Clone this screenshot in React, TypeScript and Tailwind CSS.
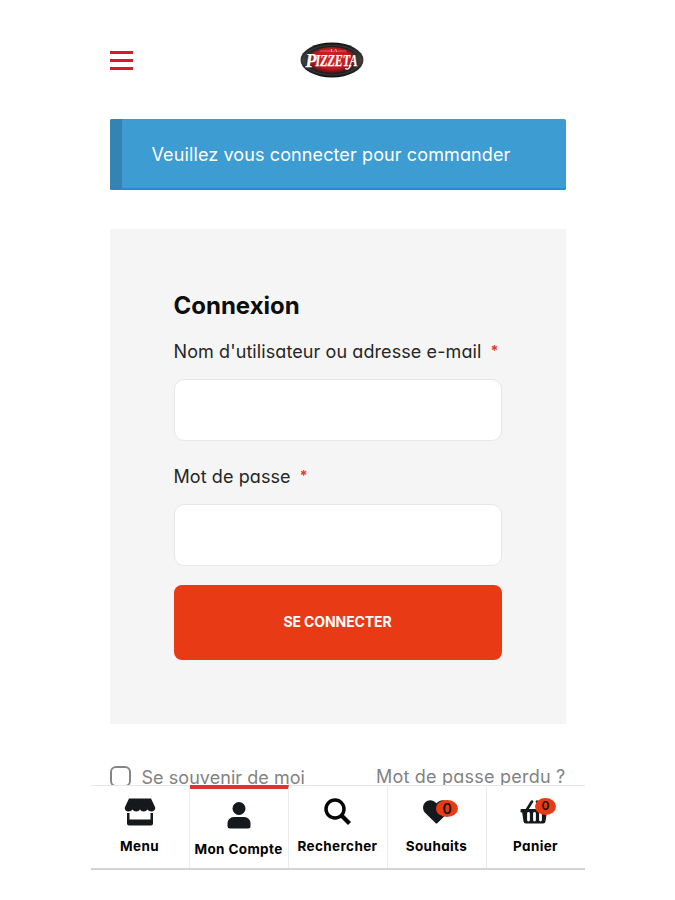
import type { ReactNode } from "react";

function Logo() {
  return (
    <svg width="64" height="36" viewBox="0 0 64 36" className="block">
      <defs>
        <radialGradient id="red" cx="50%" cy="45%" r="55%">
          <stop offset="0" stopColor="#e0252b" />
          <stop offset="0.7" stopColor="#bd1a20" />
          <stop offset="1" stopColor="#5d1014" />
        </radialGradient>
        <linearGradient id="rim" x1="0" y1="0" x2="0" y2="1">
          <stop offset="0" stopColor="#161616" />
          <stop offset="0.5" stopColor="#3b3b3b" />
          <stop offset="1" stopColor="#141414" />
        </linearGradient>
      </defs>
      <ellipse cx="32" cy="18" rx="31.5" ry="17.5" fill="url(#rim)" />
      <ellipse cx="32" cy="18" rx="28.5" ry="14.8" fill="none" stroke="#4c4c4c" strokeWidth="0.6" />
      <ellipse cx="32" cy="18" rx="23.5" ry="13" fill="url(#red)" />
      <path d="M20 9h10M38 9h8" stroke="#dc8a8a" strokeWidth="0.7" />
      <text x="34" y="10" textAnchor="middle" fontFamily="Liberation Serif, serif" fontWeight="700" fontSize="5" fill="#f3c9c9">LA</text>
      <g fontFamily="Liberation Serif, serif" fontWeight="700" fontStyle="italic" fill="#fff" stroke="#fff" strokeWidth="0.25">
        <text x="5.5" y="24.5" fontSize="19" textLength="11" lengthAdjust="spacingAndGlyphs">P</text>
        <text x="15.500" y="24" fontSize="16" textLength="42" lengthAdjust="spacingAndGlyphs">IZZETA</text>
      </g>
      <path d="M50.500 23c-1 4.500-4 5-5 3" fill="none" stroke="#fff" strokeWidth="1.3" />
    </svg>
  );
}

function StoreIcon() {
  return (
    <svg width="32" height="28" viewBox="0 0 32 28" fill="#15181d">
      <path d="M5 0.5h22l4 8.5c.8 2.2-.8 4.5-3.5 4.5-1.8 0-3-.8-4-2-1 1.200-2.200 2-3.800 2-1.700 0-2.900-.8-3.700-2-.9 1.200-2.100 2-3.800 2-1.600 0-2.900-.8-3.700-2-.9 1.200-2.200 2-4 2C1.800 13.500.2 11.200 1 9z" />
      <path d="M3 15h2.500v6.500h21v-6.500h2.500v10.500q0 2-2 2H5q-2 0-2-2z" />
    </svg>
  );
}

function UserIcon() {
  return (
    <svg width="24" height="27" viewBox="0 0 24 27" fill="#15181d">
      <circle cx="12" cy="6.5" r="6.500" />
      <path d="M7 15h10c4 0 6.500 3 6.500 6.500V24q0 2.500-2.500 2.500H3Q.5 26.500.5 24v-2.500C.5 18 3 15 7 15z" />
    </svg>
  );
}

function SearchIcon() {
  return (
    <svg width="27" height="27" viewBox="0 0 27 27" fill="none" stroke="#050505">
      <circle cx="11" cy="11" r="9" strokeWidth="3.5" />
      <path d="M17.500 17.500l8 8" strokeWidth="4.2" />
    </svg>
  );
}

function HeartIcon() {
  return (
    <svg width="27" height="24" viewBox="0 0 27 24" fill="#15181d">
      <path d="M2.300 2.300C5.300-.7 10-.4 13.500 3.300 17-.4 21.700-.7 24.700 2.300c3 3.100 3 7.600 0 10.700L14.500 23q-1 1-2 0L2.300 13c-3-3.100-3-7.600 0-10.700z" />
    </svg>
  );
}

function BasketIcon() {
  return (
    <svg width="29" height="24" viewBox="0 0 29 24">
      <path d="M6 11L12 1.500M23 11L17 1.500" stroke="#15181d" strokeWidth="2.6" strokeLinecap="round" />
      <path d="M1.500 9h26q1 0 1 1v1.500q0 1-1 1h-.7l-1.300 9q-.3 2-2.300 2H5.800q-2 0-2.300-2l-1.300-9h-.7q-1 0-1-1V10q0-1 1-1z" fill="#15181d" />
      <path d="M8.500 13.500v6.500M14.500 13.500v6.500M20.500 13.500v6.500" stroke="#fff" strokeWidth="2.8" strokeLinecap="round" />
    </svg>
  );
}

function Field({ label, gap }: { label: string; gap: string }) {
  return (
    <label className={`block ${gap}`}>
      <span className="flex h-7 items-center gap-[9px] whitespace-nowrap pt-0.5 text-[18px] text-[#262626]">
        <span className="tracking-[0.09px]">{label}</span>
        <span className="pb-0.5 text-[14px] font-bold text-[#e53a18]">*</span>
      </span>
      <input className="mt-[15px] block h-[62px] w-full rounded-[10px] border border-[#e7e7e7] bg-white outline-none" />
    </label>
  );
}

function Tab({ label, icon, active, last }: { label: string; icon: ReactNode; active?: boolean; last?: boolean }) {
  return (
    <div className={`flex min-w-0 flex-1 flex-col items-center ${last ? "" : "border-r border-[#ececec]"} ${active ? "-mt-px border-t-4 border-t-[#da3530]" : ""}`}>
      <div className={`flex h-[50px] items-center ${active ? "pt-0.5" : "pt-px"}`}>{icon}</div>
      <span className="whitespace-nowrap font-bold leading-5 tracking-[0.37px] text-black">{label}</span>
    </div>
  );
}

export default function App() {
  return (
    <div className="flex h-[900px] justify-center bg-white font-['Inter','Liberation_Sans',sans-serif] [font-feature-settings:'cv11']">
      <main className="w-[494px]">
        <header className="flex h-[119px] items-center px-[19px] pt-px">
          <button aria-label="Menu" className="flex w-[23px] flex-col gap-[5px]">
            <span className="h-[3px] bg-[#cb2027]" />
            <span className="h-[3px] bg-[#cb2027]" />
            <span className="h-[3px] bg-[#cb2027]" />
          </button>
          <div className="ml-[167px]"><Logo /></div>
        </header>
        <div className="mx-[19px] flex h-[71px] items-center rounded-[2px] bg-[#3d9cd2] text-white shadow-[inset_12px_0_0_#3583b3,inset_0_-2px_0_#1e8fd0]">
          <span className="whitespace-nowrap pb-px pl-[42px] text-[18px] tracking-[0.11px]">Veuillez vous connecter pour commander</span>
        </div>
        <section className="mx-[19px] mt-[39px] h-[495px] bg-[#f5f5f5] px-[64px] pt-[60px]">
          <h1 className="pt-px text-[24px] font-bold leading-8 text-[#0d0d0d]">Connexion</h1>
          <Field label="Nom d'utilisateur ou adresse e-mail" gap="mt-[14px]" />
          <Field label="Mot de passe" gap="mt-[20px]" />
          <button className="mt-[19px] flex h-[75px] w-full items-center justify-center rounded-[8px] bg-[#e83a15] pb-[3px] text-[14px] font-bold tracking-[-0.1px] text-white">SE CONNECTER</button>
        </section>
        <div className="flex h-[61px] items-start justify-between overflow-hidden px-[19px] pt-[41px] text-[18px] text-[#828282]">
          <label className="flex h-6 items-center gap-[11px]">
            <span className="-mt-0.5 h-[21px] w-[21px] rounded-[6px] border-2 border-[#858585]" />
            <span className="whitespace-nowrap tracking-[0.05px]">Se souvenir de moi</span>
          </label>
          <a className="whitespace-nowrap leading-6 tracking-[0.22px]">Mot de passe perdu ?</a>
        </div>
        <nav className="flex h-[85px] border-b-2 border-t border-b-[#d4d4d4] border-t-[#e7e7e7] text-[13.500px]">
          <Tab label="Menu" icon={<StoreIcon />} />
          <Tab label="Mon Compte" icon={<UserIcon />} active />
          <Tab label="Rechercher" icon={<SearchIcon />} />
          <Tab
            label="Souhaits"
            icon={
              <div className="relative">
                <HeartIcon />
                <span className="absolute left-[13px] top-0 flex h-[17px] w-[22px] items-center justify-center rounded-[50%] bg-[#e83a15] text-[14px] font-semibold text-[#111]">0</span>
              </div>
            }
          />
          <Tab
            label="Panier"
            last
            icon={
              <div className="relative -ml-[2px]">
                <BasketIcon />
                <span className="absolute -top-[2px] left-[15px] flex h-[17px] w-[21px] items-center justify-center rounded-[50%] bg-[#e83a15] text-[12px] font-semibold text-[#111]">0</span>
              </div>
            }
          />
        </nav>
      </main>
    </div>
  );
}
